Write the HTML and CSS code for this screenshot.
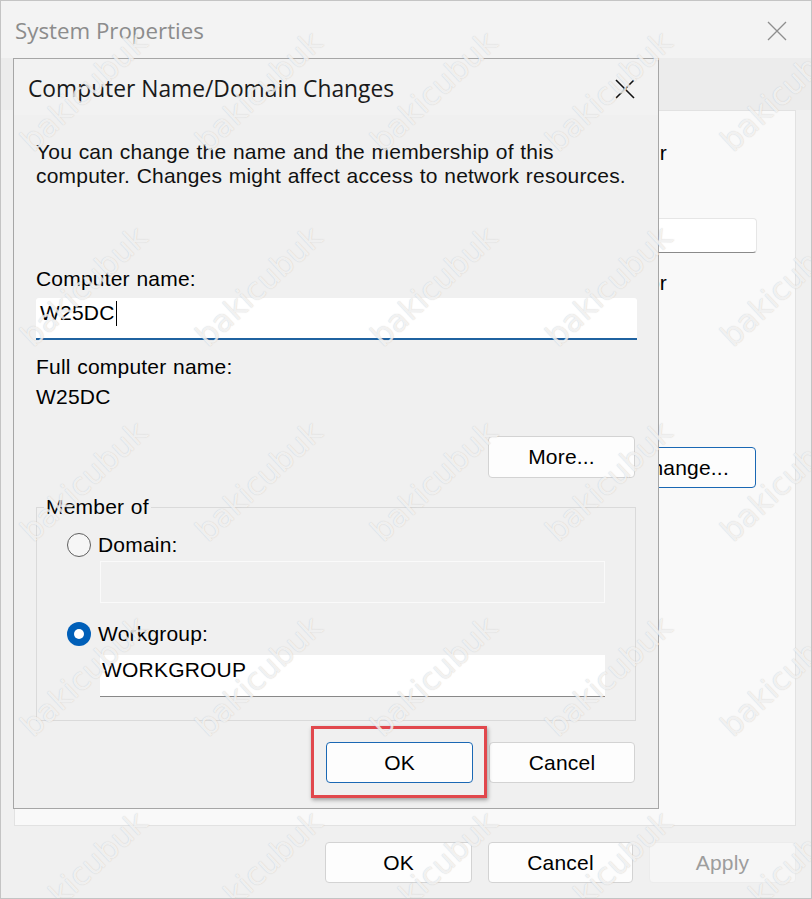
FILE: index.html
```html
<!DOCTYPE html>
<html lang="en">
<head>
<meta charset="utf-8">
<title>System Properties</title>
<link rel="stylesheet" href="styles.css">
</head>
<body>
<div class="window">
  <div class="win-title">
    <span class="win-title-text">System Properties</span>
    <svg class="win-close" width="20" height="20" viewBox="0 0 20 20"><path d="M1 1L19 19M19 1L1 19"/></svg>
  </div>
  <div class="tabs"></div>
  <div class="panel">
    <p class="p-line p-line1">Windows uses the following information to identify your</p>
    <div class="p-input"></div>
    <p class="p-line p-line2">For example: "Kitchen Computer" or</p>
    <button class="btn btn-accent p-change">Change...</button>
  </div>
  <div class="win-buttons">
    <button class="btn btn-ok2">OK</button>
    <button class="btn btn-cancel2">Cancel</button>
    <button class="btn btn-disabled btn-apply">Apply</button>
  </div>

  <div class="dialog">
    <div class="dlg-title">
      <span class="dlg-title-text">Computer Name/Domain Changes</span>
      <svg class="dlg-close" width="20" height="20" viewBox="0 0 20 20"><path d="M1 1L19 19M19 1L1 19"/></svg>
    </div>
    <div class="dlg-body">
      <p class="desc">You can change the name and the membership of this<br>computer. Changes might affect access to network resources.</p>
      <p class="label label-cn">Computer name:</p>
      <div class="cn-input">W25DC<span class="caret"></span></div>
      <p class="label label-full">Full computer name:</p>
      <p class="label value-full">W25DC</p>
      <button class="btn btn-more">More...</button>
      <div class="group">
        <span class="group-label">Member of</span>
        <div class="radio-row row-domain">
          <span class="radio"></span>
          <span class="radio-text">Domain:</span>
        </div>
        <div class="field field-disabled"></div>
        <div class="radio-row row-work">
          <span class="radio radio-on"></span>
          <span class="radio-text">Workgroup:</span>
        </div>
        <div class="field field-work">WORKGROUP</div>
      </div>
      <div class="dlg-buttons">
        <span class="highlight"><button class="btn btn-accent btn-ok">OK</button></span>
        <button class="btn btn-cancel">Cancel</button>
      </div>
    </div>
  </div>

  <div class="watermarks">
    <span>bakicubuk</span><span>bakicubuk</span><span>bakicubuk</span><span>bakicubuk</span><span>bakicubuk</span>
    <span>bakicubuk</span><span>bakicubuk</span><span>bakicubuk</span><span>bakicubuk</span><span>bakicubuk</span>
    <span>bakicubuk</span><span>bakicubuk</span><span>bakicubuk</span><span>bakicubuk</span><span>bakicubuk</span>
    <span>bakicubuk</span><span>bakicubuk</span><span>bakicubuk</span><span>bakicubuk</span><span>bakicubuk</span>
    <span>bakicubuk</span><span>bakicubuk</span><span>bakicubuk</span><span>bakicubuk</span><span>bakicubuk</span>
  </div>
</div>
</body>
</html>
```
FILE: styles.css
```css
* { box-sizing: border-box; }
html, body { margin: 0; padding: 0; }
body {
  width: 812px;
  height: 899px;
  overflow: hidden;
  font-family: "Liberation Sans", Arial, sans-serif;
  font-size: 21px;
  line-height: 24px;
  letter-spacing: 0.2px;
  word-spacing: 0.6px;
  color: #000;
  background: #f0f0f0;
}
p { margin: 0; }

.window {
  position: relative;
  width: 812px;
  height: 899px;
  border: 1px solid #c4c4c4;
  background: #f0f0f0;
  display: flex;
  flex-direction: column;
  overflow: hidden;
}

.win-title {
  height: 57px;
  flex: none;
  display: flex;
  align-items: center;
  justify-content: space-between;
  padding: 2px 24px 0 14px;
  background: #f3f3f3;
}
.win-title-text {
  font-family: "Open Sans", "Noto Sans", sans-serif;
  font-size: 22.3px;
  line-height: 30px;
  letter-spacing: 0;
  word-spacing: 0;
  color: #8c8c8c;
}
.win-close path { stroke: #8e8e8e; stroke-width: 1.3; fill: none; }

.tabs {
  height: 52px;
  flex: none;
  background: #ececec;
}

.panel {
  flex: none;
  height: 716px;
  margin: 0 15px 0 13px;
  border: 1px solid #e2e2e2;
  background: #f9f9f9;
  display: flex;
  flex-direction: column;
  align-items: flex-end;
}
.p-line { white-space: nowrap; margin-right: 128px; }
.p-line1 { margin-top: 30px; }
.p-input {
  margin-top: 53px;
  margin-right: 38px;
  width: 520px;
  height: 35px;
  background: #fff;
  border: 1px solid #e6e6e6;
  border-bottom-color: #8a8a8a;
  border-radius: 4px;
}
.p-line2 { margin-top: 18px; }
.p-change {
  margin-top: 152px;
  margin-right: 39px;
  width: 147px;
  height: 41px;
}

.btn {
  font-family: "Liberation Sans", Arial, sans-serif;
  font-size: 21px;
  line-height: 24px;
  letter-spacing: 0.2px;
  color: #000;
  background: #fdfdfd;
  border: 1px solid #d3d3d3;
  border-radius: 4px;
  padding: 0;
  display: flex;
  align-items: center;
  justify-content: center;
}
.btn-accent { border-color: #1a68b4; }
.btn-disabled { background: #f6f6f6; border-color: #ececec; color: #9d9d9d; }

.win-buttons {
  flex: none;
  margin-top: 16px;
  padding-right: 15px;
  display: flex;
  justify-content: flex-end;
  gap: 16px;
}
.win-buttons .btn { height: 41px; }
.btn-ok2 { width: 147px; }
.btn-cancel2 { width: 145px; }
.btn-apply { width: 147px; }

/* dialog */
.dialog {
  position: absolute;
  left: 12px;
  top: 57px;
  width: 646px;
  height: 751px;
  border: 1px solid #a6a6a6;
  background: #f0f0f0;
  display: flex;
  flex-direction: column;
  z-index: 2;
}
.dlg-title {
  height: 56px;
  flex: none;
  display: flex;
  align-items: center;
  justify-content: space-between;
  padding: 4px 23px 0 14px;
  background: #f2f2f2;
}
.dlg-title-text {
  font-family: "Open Sans", "Noto Sans", sans-serif;
  font-size: 22.8px;
  line-height: 30px;
  letter-spacing: 0;
  word-spacing: 0;
  color: #1a1a1a;
}
.dlg-close path { stroke: #111; stroke-width: 1.6; fill: none; }

.dlg-body {
  padding: 0 21px 0 22px;
  display: flex;
  flex-direction: column;
}
.desc { margin-top: 25px; color: #111; }
.label-cn { margin-top: 79px; }
.cn-input {
  margin-top: 7px;
  height: 42px;
  padding: 3px 0 0 4px;
  background: #fff;
  border-bottom: 2px solid #1f62a0;
  border-radius: 3px 3px 0 0;
}
.caret {
  display: inline-block;
  width: 1px;
  height: 25px;
  background: #000;
  vertical-align: -6px;
  margin-left: 1px;
}
.label-full { margin-top: 15px; }
.value-full { margin-top: 6px; }
.btn-more {
  margin-top: 27px;
  align-self: flex-end;
  margin-right: 2px;
  width: 147px;
  height: 42px;
}

.group {
  margin-top: 29px;
  width: 600px;
  height: 214px;
  border: 1px solid #dadada;
  padding: 0 0 0 30px;
  display: flex;
  flex-direction: column;
  align-items: flex-start;
}
.group-label {
  margin-top: -13px;
  margin-left: -23px;
  padding: 0 2px;
  background: #f0f0f0;
}
.radio-row {
  height: 26px;
  display: flex;
  align-items: center;
  gap: 7px;
}
.row-domain { margin-top: 13px; }
.row-work { margin-top: 18px; }
.radio {
  width: 24px;
  height: 24px;
  border-radius: 50%;
  border: 1px solid #5f5f5f;
  background: #f6f6f6;
  display: flex;
  align-items: center;
  justify-content: center;
}
.radio-on {
  border: none;
  background: #005fb8;
}
.radio-on::after {
  content: "";
  width: 10px;
  height: 10px;
  border-radius: 50%;
  background: #fff;
}
.field {
  margin-left: 33px;
  width: 505px;
  height: 42px;
}
.field-disabled {
  margin-top: 3px;
  border: 1px solid #fafafa;
  background: #f0f0f0;
}
.field-work {
  margin-top: 8px;
  background: #fff;
  border-bottom: 1px solid #888;
  padding: 3px 0 0 2px;
  line-height: 24px;
}

.dlg-buttons {
  margin-top: 21px;
  padding-right: 2px;
  display: flex;
  justify-content: flex-end;
  gap: 16px;
}
.dlg-buttons .btn { height: 41px; }
.highlight { position: relative; display: block; }
.highlight::after {
  content: "";
  position: absolute;
  left: -15px;
  right: -14px;
  top: -16px;
  bottom: -15px;
  border: 3px solid #e1484d;
  box-shadow: 1px 2px 4px rgba(0, 0, 0, 0.35);
}
.btn-ok { width: 147px; }
.btn-cancel { width: 146px; }

/* watermark */
.watermarks {
  position: absolute;
  left: -5px;
  top: -8px;
  display: grid;
  grid-template-columns: repeat(5, 175px);
  grid-auto-rows: 195px;
  place-items: center;
  pointer-events: none;
  z-index: 5;
}
.watermarks span {
  display: block;
  font-family: "DejaVu Sans", sans-serif;
  font-size: 31px;
  line-height: 36px;
  letter-spacing: 0;
  word-spacing: 0;
  color: rgba(255, 255, 255, 0.75);
  text-shadow: 0 0 1px rgba(120, 120, 120, 0.4);
  transform: rotate(-43deg);
  white-space: nowrap;
}
```
